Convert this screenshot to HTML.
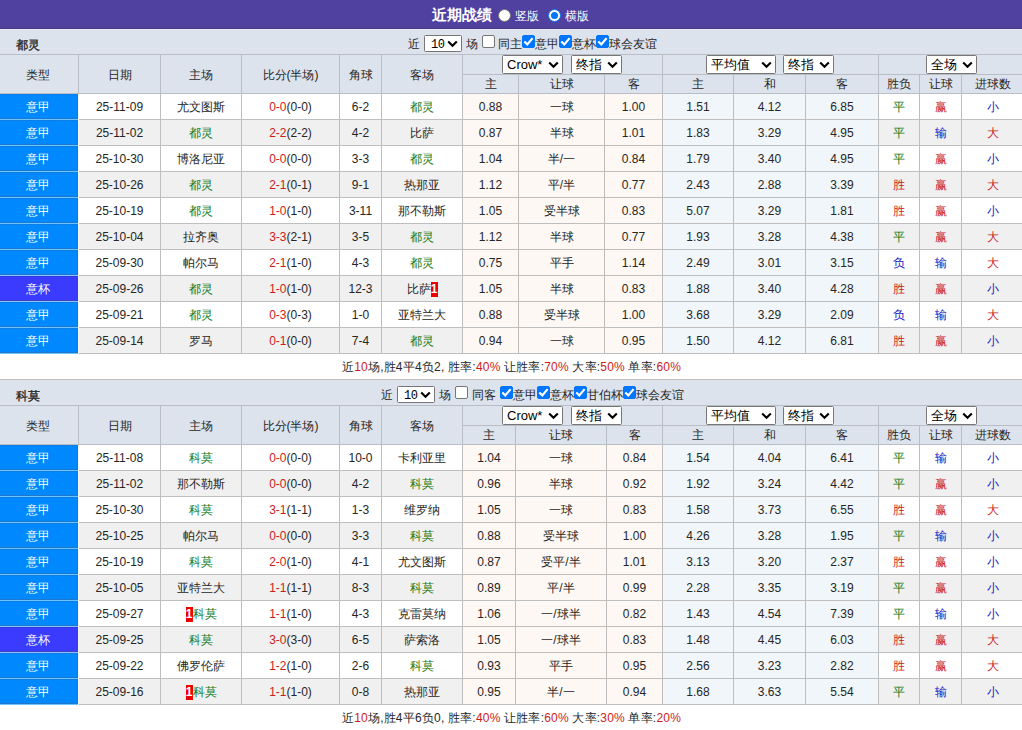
<!DOCTYPE html>
<html><head><meta charset="utf-8"><style>
html,body{margin:0;padding:0;width:1022px;height:730px;overflow:hidden;background:#fff}
body{position:relative;font-family:"Liberation Sans",sans-serif;font-size:12px;color:#262626}
body>div{position:absolute}
.c{text-align:center;white-space:nowrap;overflow:hidden}
.t{white-space:nowrap}
.sel{position:absolute;background:#fff;border:1px solid #767676;border-radius:1.5px;color:#000;padding-left:4px;box-sizing:content-box;white-space:nowrap}
.sel{width:auto}
.cb{width:11px;height:11px;border-radius:2px}
.cb.off{background:#fff;border:1px solid #767676}
.cb.on{background:#0075ff;border:1px solid #0075ff}
.cb svg{position:absolute;left:-1px;top:-1px}
.rad{width:11px;height:11px;border-radius:50%;background:#fff;border:1px solid #767676}
.rad.on{border:1px solid #0075ff;background:#fff}
.rad.on div{position:absolute;left:2px;top:2px;width:7px;height:7px;border-radius:50%;background:#0075ff}
.bd{display:inline-block;background:#e00;color:#fff;font-weight:bold;width:7px;height:15px;line-height:15px;vertical-align:middle;text-align:center;font-size:12px}
</style></head><body>
<div style="left:0px;top:0px;width:1022px;height:28px;background:#5040a0"></div>
<div style="left:0px;top:28px;width:1022px;height:1px;background:#4a3d82"></div>
<div class="t" style="left:432px;top:0px;font-size:15px;font-weight:bold;color:#fff;line-height:29px">近期战绩</div>
<div class="rad" style="left:498px;top:9px"></div>
<div class="t" style="left:515px;top:2px;color:#fff;line-height:29px">竖版</div>
<div class="rad on" style="left:548px;top:9px"><div></div></div>
<div class="t" style="left:565px;top:2px;color:#fff;line-height:29px">横版</div>
<div style="left:0px;top:29px;width:1022px;height:25px;background:#dde3ed"></div>
<div style="left:0px;top:29px;width:1022px;height:1px;background:#e4e4f8"></div>
<div class="t" style="left:16px;top:33px;-webkit-text-stroke:0.3px #222;line-height:25px;color:#222">都灵</div>
<div class="t" style="left:408px;top:32px;line-height:25px">近</div>
<div class="sel" style="left:424px;top:35px;width:32px;height:15px;line-height:15px;font-size:13px"><span style="font-family:Liberation Mono;font-size:12px;letter-spacing:-0.5px;margin-left:2px">10</span><svg class="chev" width="11" height="8" viewBox="0 0 11 8" style="position:absolute;right:3px;top:4px"><path d="M1.2 1.5 L5.5 5.8 L9.8 1.5" fill="none" stroke="#000" stroke-width="2.1"/></svg></div>
<div class="t" style="left:466px;top:32px;line-height:25px">场</div>
<div class="cb off" style="left:482px;top:35px"></div>
<div class="t" style="left:498px;top:32px;line-height:25px">同主</div>
<div class="cb on" style="left:522px;top:35px"><svg width="13" height="13" viewBox="0 0 13 13"><path d="M2.3 6.5 L5.3 9.4 L10.6 3.1" fill="none" stroke="#fff" stroke-width="2.2"/></svg></div>
<div class="t" style="left:535px;top:32px;line-height:25px">意甲</div>
<div class="cb on" style="left:559px;top:35px"><svg width="13" height="13" viewBox="0 0 13 13"><path d="M2.3 6.5 L5.3 9.4 L10.6 3.1" fill="none" stroke="#fff" stroke-width="2.2"/></svg></div>
<div class="t" style="left:572px;top:32px;line-height:25px">意杯</div>
<div class="cb on" style="left:596px;top:35px"><svg width="13" height="13" viewBox="0 0 13 13"><path d="M2.3 6.5 L5.3 9.4 L10.6 3.1" fill="none" stroke="#fff" stroke-width="2.2"/></svg></div>
<div class="t" style="left:609px;top:32px;line-height:25px">球会友谊</div>
<div style="left:0px;top:54px;width:1022px;height:1px;background:#b9bec6"></div>
<div style="left:0px;top:55px;width:1022px;height:38px;background:#dde3ed"></div>
<div class="c" style="left:-1px;top:56px;width:78px;height:38px;line-height:38px;">类型</div>
<div class="c" style="left:79px;top:56px;width:81px;height:38px;line-height:38px;">日期</div>
<div class="c" style="left:161px;top:56px;width:80px;height:38px;line-height:38px;">主场</div>
<div class="c" style="left:242px;top:56px;width:97px;height:38px;line-height:38px;">比分(半场)</div>
<div class="c" style="left:340px;top:56px;width:41px;height:38px;line-height:38px;">角球</div>
<div class="c" style="left:382px;top:56px;width:80px;height:38px;line-height:38px;">客场</div>
<div style="left:462px;top:74px;width:560px;height:1px;background:#b9bec6"></div>
<div style="left:0px;top:93px;width:1022px;height:1px;background:#b9bec6"></div>
<div class="sel" style="left:502px;top:55px;width:55px;height:17px;line-height:17px;font-size:13px">Crow*<svg class="chev" width="11" height="8" viewBox="0 0 11 8" style="position:absolute;right:3px;top:5px"><path d="M1.2 1.5 L5.5 5.8 L9.8 1.5" fill="none" stroke="#000" stroke-width="2.1"/></svg></div>
<div class="sel" style="left:571px;top:55px;width:45px;height:17px;line-height:17px;font-size:13px">终指<svg class="chev" width="11" height="8" viewBox="0 0 11 8" style="position:absolute;right:3px;top:5px"><path d="M1.2 1.5 L5.5 5.8 L9.8 1.5" fill="none" stroke="#000" stroke-width="2.1"/></svg></div>
<div class="sel" style="left:706px;top:55px;width:64px;height:17px;line-height:17px;font-size:13px">平均值<svg class="chev" width="11" height="8" viewBox="0 0 11 8" style="position:absolute;right:3px;top:5px"><path d="M1.2 1.5 L5.5 5.8 L9.8 1.5" fill="none" stroke="#000" stroke-width="2.1"/></svg></div>
<div class="sel" style="left:783px;top:55px;width:45px;height:17px;line-height:17px;font-size:13px">终指<svg class="chev" width="11" height="8" viewBox="0 0 11 8" style="position:absolute;right:3px;top:5px"><path d="M1.2 1.5 L5.5 5.8 L9.8 1.5" fill="none" stroke="#000" stroke-width="2.1"/></svg></div>
<div class="sel" style="left:926px;top:55px;width:45px;height:17px;line-height:17px;font-size:13px">全场<svg class="chev" width="11" height="8" viewBox="0 0 11 8" style="position:absolute;right:3px;top:5px"><path d="M1.2 1.5 L5.5 5.8 L9.8 1.5" fill="none" stroke="#000" stroke-width="2.1"/></svg></div>
<div class="c" style="left:463px;top:75px;width:55px;height:18px;line-height:18px;">主</div>
<div class="c" style="left:519px;top:75px;width:85px;height:18px;line-height:18px;">让球</div>
<div class="c" style="left:605px;top:75px;width:57px;height:18px;line-height:18px;">客</div>
<div class="c" style="left:663px;top:75px;width:70px;height:18px;line-height:18px;">主</div>
<div class="c" style="left:734px;top:75px;width:71px;height:18px;line-height:18px;">和</div>
<div class="c" style="left:806px;top:75px;width:72px;height:18px;line-height:18px;">客</div>
<div class="c" style="left:879px;top:75px;width:40px;height:18px;line-height:18px;">胜负</div>
<div class="c" style="left:920px;top:75px;width:41px;height:18px;line-height:18px;">让球</div>
<div class="c" style="left:962px;top:75px;width:61px;height:18px;line-height:18px;">进球数</div>
<div style="left:0px;top:94px;width:1022px;height:25px;background:#fff"></div>
<div style="left:0px;top:94px;width:78px;height:25px;background:#0088ff"></div>
<div style="left:0px;top:118px;width:77px;height:1px;background:#1e78cc"></div>
<div style="left:0px;top:94px;width:77px;height:1px;background:#0c7ee6"></div>
<div style="left:77px;top:94px;width:1px;height:25px;background:#1e78cc"></div>
<div class="c" style="left:-1px;top:95px;width:78px;height:25px;line-height:25px;color:#fff">意甲</div>
<div class="c" style="left:79px;top:95px;width:81px;height:25px;line-height:25px;">25-11-09</div>
<div class="c" style="left:161px;top:95px;width:80px;height:25px;line-height:25px;"><span style="">尤文图斯</span></div>
<div class="c" style="left:242px;top:95px;width:97px;height:25px;line-height:25px;"><span style="color:#cc1c1c">0-0</span>(0-0)</div>
<div class="c" style="left:340px;top:95px;width:41px;height:25px;line-height:25px;">6-2</div>
<div class="c" style="left:382px;top:95px;width:80px;height:25px;line-height:25px;"><span style="color:#157a15">都灵</span></div>
<div style="left:463px;top:94px;width:199px;height:25px;background:#fdf8f4"></div>
<div class="c" style="left:463px;top:95px;width:55px;height:25px;line-height:25px;">0.88</div>
<div class="c" style="left:519px;top:95px;width:85px;height:25px;line-height:25px;">一球</div>
<div class="c" style="left:605px;top:95px;width:57px;height:25px;line-height:25px;">1.00</div>
<div style="left:663px;top:94px;width:215px;height:25px;background:#f0f6fa"></div>
<div class="c" style="left:663px;top:95px;width:70px;height:25px;line-height:25px;">1.51</div>
<div class="c" style="left:734px;top:95px;width:71px;height:25px;line-height:25px;">4.12</div>
<div class="c" style="left:806px;top:95px;width:72px;height:25px;line-height:25px;">6.85</div>
<div class="c" style="left:879px;top:95px;width:40px;height:25px;line-height:25px;color:#157a15">平</div>
<div class="c" style="left:920px;top:95px;width:41px;height:25px;line-height:25px;color:#cc1c1c">赢</div>
<div class="c" style="left:962px;top:95px;width:61px;height:25px;line-height:25px;color:#1616c4">小</div>
<div style="left:0px;top:119px;width:78px;height:1px;background:#6cc4ff"></div>
<div style="left:78px;top:119px;width:944px;height:1px;background:#bebebe"></div>
<div style="left:0px;top:120px;width:1022px;height:25px;background:#f0f0f0"></div>
<div style="left:0px;top:120px;width:78px;height:25px;background:#0088ff"></div>
<div style="left:0px;top:144px;width:77px;height:1px;background:#1e78cc"></div>
<div style="left:0px;top:120px;width:77px;height:1px;background:#0c7ee6"></div>
<div style="left:77px;top:120px;width:1px;height:25px;background:#1e78cc"></div>
<div class="c" style="left:-1px;top:121px;width:78px;height:25px;line-height:25px;color:#fff">意甲</div>
<div class="c" style="left:79px;top:121px;width:81px;height:25px;line-height:25px;">25-11-02</div>
<div class="c" style="left:161px;top:121px;width:80px;height:25px;line-height:25px;"><span style="color:#157a15">都灵</span></div>
<div class="c" style="left:242px;top:121px;width:97px;height:25px;line-height:25px;"><span style="color:#cc1c1c">2-2</span>(2-2)</div>
<div class="c" style="left:340px;top:121px;width:41px;height:25px;line-height:25px;">4-2</div>
<div class="c" style="left:382px;top:121px;width:80px;height:25px;line-height:25px;"><span style="">比萨</span></div>
<div style="left:463px;top:120px;width:199px;height:25px;background:#fdf8f4"></div>
<div class="c" style="left:463px;top:121px;width:55px;height:25px;line-height:25px;">0.87</div>
<div class="c" style="left:519px;top:121px;width:85px;height:25px;line-height:25px;">半球</div>
<div class="c" style="left:605px;top:121px;width:57px;height:25px;line-height:25px;">1.01</div>
<div style="left:663px;top:120px;width:215px;height:25px;background:#f0f6fa"></div>
<div class="c" style="left:663px;top:121px;width:70px;height:25px;line-height:25px;">1.83</div>
<div class="c" style="left:734px;top:121px;width:71px;height:25px;line-height:25px;">3.29</div>
<div class="c" style="left:806px;top:121px;width:72px;height:25px;line-height:25px;">4.95</div>
<div class="c" style="left:879px;top:121px;width:40px;height:25px;line-height:25px;color:#157a15">平</div>
<div class="c" style="left:920px;top:121px;width:41px;height:25px;line-height:25px;color:#1616c4">输</div>
<div class="c" style="left:962px;top:121px;width:61px;height:25px;line-height:25px;color:#cc1c1c">大</div>
<div style="left:0px;top:145px;width:78px;height:1px;background:#6cc4ff"></div>
<div style="left:78px;top:145px;width:944px;height:1px;background:#bebebe"></div>
<div style="left:0px;top:146px;width:1022px;height:25px;background:#fff"></div>
<div style="left:0px;top:146px;width:78px;height:25px;background:#0088ff"></div>
<div style="left:0px;top:170px;width:77px;height:1px;background:#1e78cc"></div>
<div style="left:0px;top:146px;width:77px;height:1px;background:#0c7ee6"></div>
<div style="left:77px;top:146px;width:1px;height:25px;background:#1e78cc"></div>
<div class="c" style="left:-1px;top:147px;width:78px;height:25px;line-height:25px;color:#fff">意甲</div>
<div class="c" style="left:79px;top:147px;width:81px;height:25px;line-height:25px;">25-10-30</div>
<div class="c" style="left:161px;top:147px;width:80px;height:25px;line-height:25px;"><span style="">博洛尼亚</span></div>
<div class="c" style="left:242px;top:147px;width:97px;height:25px;line-height:25px;"><span style="color:#cc1c1c">0-0</span>(0-0)</div>
<div class="c" style="left:340px;top:147px;width:41px;height:25px;line-height:25px;">3-3</div>
<div class="c" style="left:382px;top:147px;width:80px;height:25px;line-height:25px;"><span style="color:#157a15">都灵</span></div>
<div style="left:463px;top:146px;width:199px;height:25px;background:#fdf8f4"></div>
<div class="c" style="left:463px;top:147px;width:55px;height:25px;line-height:25px;">1.04</div>
<div class="c" style="left:519px;top:147px;width:85px;height:25px;line-height:25px;">半/一</div>
<div class="c" style="left:605px;top:147px;width:57px;height:25px;line-height:25px;">0.84</div>
<div style="left:663px;top:146px;width:215px;height:25px;background:#f0f6fa"></div>
<div class="c" style="left:663px;top:147px;width:70px;height:25px;line-height:25px;">1.79</div>
<div class="c" style="left:734px;top:147px;width:71px;height:25px;line-height:25px;">3.40</div>
<div class="c" style="left:806px;top:147px;width:72px;height:25px;line-height:25px;">4.95</div>
<div class="c" style="left:879px;top:147px;width:40px;height:25px;line-height:25px;color:#157a15">平</div>
<div class="c" style="left:920px;top:147px;width:41px;height:25px;line-height:25px;color:#cc1c1c">赢</div>
<div class="c" style="left:962px;top:147px;width:61px;height:25px;line-height:25px;color:#1616c4">小</div>
<div style="left:0px;top:171px;width:78px;height:1px;background:#6cc4ff"></div>
<div style="left:78px;top:171px;width:944px;height:1px;background:#bebebe"></div>
<div style="left:0px;top:172px;width:1022px;height:25px;background:#f0f0f0"></div>
<div style="left:0px;top:172px;width:78px;height:25px;background:#0088ff"></div>
<div style="left:0px;top:196px;width:77px;height:1px;background:#1e78cc"></div>
<div style="left:0px;top:172px;width:77px;height:1px;background:#0c7ee6"></div>
<div style="left:77px;top:172px;width:1px;height:25px;background:#1e78cc"></div>
<div class="c" style="left:-1px;top:173px;width:78px;height:25px;line-height:25px;color:#fff">意甲</div>
<div class="c" style="left:79px;top:173px;width:81px;height:25px;line-height:25px;">25-10-26</div>
<div class="c" style="left:161px;top:173px;width:80px;height:25px;line-height:25px;"><span style="color:#157a15">都灵</span></div>
<div class="c" style="left:242px;top:173px;width:97px;height:25px;line-height:25px;"><span style="color:#cc1c1c">2-1</span>(0-1)</div>
<div class="c" style="left:340px;top:173px;width:41px;height:25px;line-height:25px;">9-1</div>
<div class="c" style="left:382px;top:173px;width:80px;height:25px;line-height:25px;"><span style="">热那亚</span></div>
<div style="left:463px;top:172px;width:199px;height:25px;background:#fdf8f4"></div>
<div class="c" style="left:463px;top:173px;width:55px;height:25px;line-height:25px;">1.12</div>
<div class="c" style="left:519px;top:173px;width:85px;height:25px;line-height:25px;">平/半</div>
<div class="c" style="left:605px;top:173px;width:57px;height:25px;line-height:25px;">0.77</div>
<div style="left:663px;top:172px;width:215px;height:25px;background:#f0f6fa"></div>
<div class="c" style="left:663px;top:173px;width:70px;height:25px;line-height:25px;">2.43</div>
<div class="c" style="left:734px;top:173px;width:71px;height:25px;line-height:25px;">2.88</div>
<div class="c" style="left:806px;top:173px;width:72px;height:25px;line-height:25px;">3.39</div>
<div class="c" style="left:879px;top:173px;width:40px;height:25px;line-height:25px;color:#cc1c1c">胜</div>
<div class="c" style="left:920px;top:173px;width:41px;height:25px;line-height:25px;color:#cc1c1c">赢</div>
<div class="c" style="left:962px;top:173px;width:61px;height:25px;line-height:25px;color:#cc1c1c">大</div>
<div style="left:0px;top:197px;width:78px;height:1px;background:#6cc4ff"></div>
<div style="left:78px;top:197px;width:944px;height:1px;background:#bebebe"></div>
<div style="left:0px;top:198px;width:1022px;height:25px;background:#fff"></div>
<div style="left:0px;top:198px;width:78px;height:25px;background:#0088ff"></div>
<div style="left:0px;top:222px;width:77px;height:1px;background:#1e78cc"></div>
<div style="left:0px;top:198px;width:77px;height:1px;background:#0c7ee6"></div>
<div style="left:77px;top:198px;width:1px;height:25px;background:#1e78cc"></div>
<div class="c" style="left:-1px;top:199px;width:78px;height:25px;line-height:25px;color:#fff">意甲</div>
<div class="c" style="left:79px;top:199px;width:81px;height:25px;line-height:25px;">25-10-19</div>
<div class="c" style="left:161px;top:199px;width:80px;height:25px;line-height:25px;"><span style="color:#157a15">都灵</span></div>
<div class="c" style="left:242px;top:199px;width:97px;height:25px;line-height:25px;"><span style="color:#cc1c1c">1-0</span>(1-0)</div>
<div class="c" style="left:340px;top:199px;width:41px;height:25px;line-height:25px;">3-11</div>
<div class="c" style="left:382px;top:199px;width:80px;height:25px;line-height:25px;"><span style="">那不勒斯</span></div>
<div style="left:463px;top:198px;width:199px;height:25px;background:#fdf8f4"></div>
<div class="c" style="left:463px;top:199px;width:55px;height:25px;line-height:25px;">1.05</div>
<div class="c" style="left:519px;top:199px;width:85px;height:25px;line-height:25px;">受半球</div>
<div class="c" style="left:605px;top:199px;width:57px;height:25px;line-height:25px;">0.83</div>
<div style="left:663px;top:198px;width:215px;height:25px;background:#f0f6fa"></div>
<div class="c" style="left:663px;top:199px;width:70px;height:25px;line-height:25px;">5.07</div>
<div class="c" style="left:734px;top:199px;width:71px;height:25px;line-height:25px;">3.29</div>
<div class="c" style="left:806px;top:199px;width:72px;height:25px;line-height:25px;">1.81</div>
<div class="c" style="left:879px;top:199px;width:40px;height:25px;line-height:25px;color:#cc1c1c">胜</div>
<div class="c" style="left:920px;top:199px;width:41px;height:25px;line-height:25px;color:#cc1c1c">赢</div>
<div class="c" style="left:962px;top:199px;width:61px;height:25px;line-height:25px;color:#1616c4">小</div>
<div style="left:0px;top:223px;width:78px;height:1px;background:#6cc4ff"></div>
<div style="left:78px;top:223px;width:944px;height:1px;background:#bebebe"></div>
<div style="left:0px;top:224px;width:1022px;height:25px;background:#f0f0f0"></div>
<div style="left:0px;top:224px;width:78px;height:25px;background:#0088ff"></div>
<div style="left:0px;top:248px;width:77px;height:1px;background:#1e78cc"></div>
<div style="left:0px;top:224px;width:77px;height:1px;background:#0c7ee6"></div>
<div style="left:77px;top:224px;width:1px;height:25px;background:#1e78cc"></div>
<div class="c" style="left:-1px;top:225px;width:78px;height:25px;line-height:25px;color:#fff">意甲</div>
<div class="c" style="left:79px;top:225px;width:81px;height:25px;line-height:25px;">25-10-04</div>
<div class="c" style="left:161px;top:225px;width:80px;height:25px;line-height:25px;"><span style="">拉齐奥</span></div>
<div class="c" style="left:242px;top:225px;width:97px;height:25px;line-height:25px;"><span style="color:#cc1c1c">3-3</span>(2-1)</div>
<div class="c" style="left:340px;top:225px;width:41px;height:25px;line-height:25px;">3-5</div>
<div class="c" style="left:382px;top:225px;width:80px;height:25px;line-height:25px;"><span style="color:#157a15">都灵</span></div>
<div style="left:463px;top:224px;width:199px;height:25px;background:#fdf8f4"></div>
<div class="c" style="left:463px;top:225px;width:55px;height:25px;line-height:25px;">1.12</div>
<div class="c" style="left:519px;top:225px;width:85px;height:25px;line-height:25px;">半球</div>
<div class="c" style="left:605px;top:225px;width:57px;height:25px;line-height:25px;">0.77</div>
<div style="left:663px;top:224px;width:215px;height:25px;background:#f0f6fa"></div>
<div class="c" style="left:663px;top:225px;width:70px;height:25px;line-height:25px;">1.93</div>
<div class="c" style="left:734px;top:225px;width:71px;height:25px;line-height:25px;">3.28</div>
<div class="c" style="left:806px;top:225px;width:72px;height:25px;line-height:25px;">4.38</div>
<div class="c" style="left:879px;top:225px;width:40px;height:25px;line-height:25px;color:#157a15">平</div>
<div class="c" style="left:920px;top:225px;width:41px;height:25px;line-height:25px;color:#cc1c1c">赢</div>
<div class="c" style="left:962px;top:225px;width:61px;height:25px;line-height:25px;color:#cc1c1c">大</div>
<div style="left:0px;top:249px;width:78px;height:1px;background:#6cc4ff"></div>
<div style="left:78px;top:249px;width:944px;height:1px;background:#bebebe"></div>
<div style="left:0px;top:250px;width:1022px;height:25px;background:#fff"></div>
<div style="left:0px;top:250px;width:78px;height:25px;background:#0088ff"></div>
<div style="left:0px;top:274px;width:77px;height:1px;background:#1e78cc"></div>
<div style="left:0px;top:250px;width:77px;height:1px;background:#0c7ee6"></div>
<div style="left:77px;top:250px;width:1px;height:25px;background:#1e78cc"></div>
<div class="c" style="left:-1px;top:251px;width:78px;height:25px;line-height:25px;color:#fff">意甲</div>
<div class="c" style="left:79px;top:251px;width:81px;height:25px;line-height:25px;">25-09-30</div>
<div class="c" style="left:161px;top:251px;width:80px;height:25px;line-height:25px;"><span style="">帕尔马</span></div>
<div class="c" style="left:242px;top:251px;width:97px;height:25px;line-height:25px;"><span style="color:#cc1c1c">2-1</span>(1-0)</div>
<div class="c" style="left:340px;top:251px;width:41px;height:25px;line-height:25px;">4-3</div>
<div class="c" style="left:382px;top:251px;width:80px;height:25px;line-height:25px;"><span style="color:#157a15">都灵</span></div>
<div style="left:463px;top:250px;width:199px;height:25px;background:#fdf8f4"></div>
<div class="c" style="left:463px;top:251px;width:55px;height:25px;line-height:25px;">0.75</div>
<div class="c" style="left:519px;top:251px;width:85px;height:25px;line-height:25px;">平手</div>
<div class="c" style="left:605px;top:251px;width:57px;height:25px;line-height:25px;">1.14</div>
<div style="left:663px;top:250px;width:215px;height:25px;background:#f0f6fa"></div>
<div class="c" style="left:663px;top:251px;width:70px;height:25px;line-height:25px;">2.49</div>
<div class="c" style="left:734px;top:251px;width:71px;height:25px;line-height:25px;">3.01</div>
<div class="c" style="left:806px;top:251px;width:72px;height:25px;line-height:25px;">3.15</div>
<div class="c" style="left:879px;top:251px;width:40px;height:25px;line-height:25px;color:#1616c4">负</div>
<div class="c" style="left:920px;top:251px;width:41px;height:25px;line-height:25px;color:#1616c4">输</div>
<div class="c" style="left:962px;top:251px;width:61px;height:25px;line-height:25px;color:#cc1c1c">大</div>
<div style="left:0px;top:275px;width:78px;height:1px;background:#8cc0f8"></div>
<div style="left:78px;top:275px;width:944px;height:1px;background:#bebebe"></div>
<div style="left:0px;top:276px;width:1022px;height:25px;background:#f0f0f0"></div>
<div style="left:0px;top:276px;width:78px;height:25px;background:#3b3bff"></div>
<div style="left:0px;top:300px;width:77px;height:1px;background:#3f3fca"></div>
<div style="left:0px;top:276px;width:77px;height:1px;background:#3138e0"></div>
<div style="left:77px;top:276px;width:1px;height:25px;background:#3f3fca"></div>
<div class="c" style="left:-1px;top:277px;width:78px;height:25px;line-height:25px;color:#fff">意杯</div>
<div class="c" style="left:79px;top:277px;width:81px;height:25px;line-height:25px;">25-09-26</div>
<div class="c" style="left:161px;top:277px;width:80px;height:25px;line-height:25px;"><span style="color:#157a15">都灵</span></div>
<div class="c" style="left:242px;top:277px;width:97px;height:25px;line-height:25px;"><span style="color:#cc1c1c">1-0</span>(1-0)</div>
<div class="c" style="left:340px;top:277px;width:41px;height:25px;line-height:25px;">12-3</div>
<div class="c" style="left:382px;top:277px;width:80px;height:25px;line-height:25px;"><span style="">比萨</span><span class="bd">1</span></div>
<div style="left:463px;top:276px;width:199px;height:25px;background:#fdf8f4"></div>
<div class="c" style="left:463px;top:277px;width:55px;height:25px;line-height:25px;">1.05</div>
<div class="c" style="left:519px;top:277px;width:85px;height:25px;line-height:25px;">半球</div>
<div class="c" style="left:605px;top:277px;width:57px;height:25px;line-height:25px;">0.83</div>
<div style="left:663px;top:276px;width:215px;height:25px;background:#f0f6fa"></div>
<div class="c" style="left:663px;top:277px;width:70px;height:25px;line-height:25px;">1.88</div>
<div class="c" style="left:734px;top:277px;width:71px;height:25px;line-height:25px;">3.40</div>
<div class="c" style="left:806px;top:277px;width:72px;height:25px;line-height:25px;">4.28</div>
<div class="c" style="left:879px;top:277px;width:40px;height:25px;line-height:25px;color:#cc1c1c">胜</div>
<div class="c" style="left:920px;top:277px;width:41px;height:25px;line-height:25px;color:#cc1c1c">赢</div>
<div class="c" style="left:962px;top:277px;width:61px;height:25px;line-height:25px;color:#1616c4">小</div>
<div style="left:0px;top:301px;width:78px;height:1px;background:#8cc0f8"></div>
<div style="left:78px;top:301px;width:944px;height:1px;background:#bebebe"></div>
<div style="left:0px;top:302px;width:1022px;height:25px;background:#fff"></div>
<div style="left:0px;top:302px;width:78px;height:25px;background:#0088ff"></div>
<div style="left:0px;top:326px;width:77px;height:1px;background:#1e78cc"></div>
<div style="left:0px;top:302px;width:77px;height:1px;background:#0c7ee6"></div>
<div style="left:77px;top:302px;width:1px;height:25px;background:#1e78cc"></div>
<div class="c" style="left:-1px;top:303px;width:78px;height:25px;line-height:25px;color:#fff">意甲</div>
<div class="c" style="left:79px;top:303px;width:81px;height:25px;line-height:25px;">25-09-21</div>
<div class="c" style="left:161px;top:303px;width:80px;height:25px;line-height:25px;"><span style="color:#157a15">都灵</span></div>
<div class="c" style="left:242px;top:303px;width:97px;height:25px;line-height:25px;"><span style="color:#cc1c1c">0-3</span>(0-3)</div>
<div class="c" style="left:340px;top:303px;width:41px;height:25px;line-height:25px;">1-0</div>
<div class="c" style="left:382px;top:303px;width:80px;height:25px;line-height:25px;"><span style="">亚特兰大</span></div>
<div style="left:463px;top:302px;width:199px;height:25px;background:#fdf8f4"></div>
<div class="c" style="left:463px;top:303px;width:55px;height:25px;line-height:25px;">0.88</div>
<div class="c" style="left:519px;top:303px;width:85px;height:25px;line-height:25px;">受半球</div>
<div class="c" style="left:605px;top:303px;width:57px;height:25px;line-height:25px;">1.00</div>
<div style="left:663px;top:302px;width:215px;height:25px;background:#f0f6fa"></div>
<div class="c" style="left:663px;top:303px;width:70px;height:25px;line-height:25px;">3.68</div>
<div class="c" style="left:734px;top:303px;width:71px;height:25px;line-height:25px;">3.29</div>
<div class="c" style="left:806px;top:303px;width:72px;height:25px;line-height:25px;">2.09</div>
<div class="c" style="left:879px;top:303px;width:40px;height:25px;line-height:25px;color:#1616c4">负</div>
<div class="c" style="left:920px;top:303px;width:41px;height:25px;line-height:25px;color:#1616c4">输</div>
<div class="c" style="left:962px;top:303px;width:61px;height:25px;line-height:25px;color:#cc1c1c">大</div>
<div style="left:0px;top:327px;width:78px;height:1px;background:#6cc4ff"></div>
<div style="left:78px;top:327px;width:944px;height:1px;background:#bebebe"></div>
<div style="left:0px;top:328px;width:1022px;height:25px;background:#f0f0f0"></div>
<div style="left:0px;top:328px;width:78px;height:25px;background:#0088ff"></div>
<div style="left:0px;top:352px;width:77px;height:1px;background:#1e78cc"></div>
<div style="left:0px;top:328px;width:77px;height:1px;background:#0c7ee6"></div>
<div style="left:77px;top:328px;width:1px;height:25px;background:#1e78cc"></div>
<div class="c" style="left:-1px;top:329px;width:78px;height:25px;line-height:25px;color:#fff">意甲</div>
<div class="c" style="left:79px;top:329px;width:81px;height:25px;line-height:25px;">25-09-14</div>
<div class="c" style="left:161px;top:329px;width:80px;height:25px;line-height:25px;"><span style="">罗马</span></div>
<div class="c" style="left:242px;top:329px;width:97px;height:25px;line-height:25px;"><span style="color:#cc1c1c">0-1</span>(0-0)</div>
<div class="c" style="left:340px;top:329px;width:41px;height:25px;line-height:25px;">7-4</div>
<div class="c" style="left:382px;top:329px;width:80px;height:25px;line-height:25px;"><span style="color:#157a15">都灵</span></div>
<div style="left:463px;top:328px;width:199px;height:25px;background:#fdf8f4"></div>
<div class="c" style="left:463px;top:329px;width:55px;height:25px;line-height:25px;">0.94</div>
<div class="c" style="left:519px;top:329px;width:85px;height:25px;line-height:25px;">一球</div>
<div class="c" style="left:605px;top:329px;width:57px;height:25px;line-height:25px;">0.95</div>
<div style="left:663px;top:328px;width:215px;height:25px;background:#f0f6fa"></div>
<div class="c" style="left:663px;top:329px;width:70px;height:25px;line-height:25px;">1.50</div>
<div class="c" style="left:734px;top:329px;width:71px;height:25px;line-height:25px;">4.12</div>
<div class="c" style="left:806px;top:329px;width:72px;height:25px;line-height:25px;">6.81</div>
<div class="c" style="left:879px;top:329px;width:40px;height:25px;line-height:25px;color:#cc1c1c">胜</div>
<div class="c" style="left:920px;top:329px;width:41px;height:25px;line-height:25px;color:#cc1c1c">赢</div>
<div class="c" style="left:962px;top:329px;width:61px;height:25px;line-height:25px;color:#1616c4">小</div>
<div style="left:0px;top:353px;width:78px;height:1px;background:#6cc4ff"></div>
<div style="left:78px;top:353px;width:944px;height:1px;background:#bebebe"></div>
<div style="left:78px;top:55px;width:1px;height:38px;background:#b9bec6"></div>
<div style="left:78px;top:94px;width:1px;height:260px;background:#bebebe"></div>
<div style="left:160px;top:55px;width:1px;height:38px;background:#b9bec6"></div>
<div style="left:160px;top:94px;width:1px;height:260px;background:#bebebe"></div>
<div style="left:241px;top:55px;width:1px;height:38px;background:#b9bec6"></div>
<div style="left:241px;top:94px;width:1px;height:260px;background:#bebebe"></div>
<div style="left:339px;top:55px;width:1px;height:38px;background:#b9bec6"></div>
<div style="left:339px;top:94px;width:1px;height:260px;background:#bebebe"></div>
<div style="left:381px;top:55px;width:1px;height:38px;background:#b9bec6"></div>
<div style="left:381px;top:94px;width:1px;height:260px;background:#bebebe"></div>
<div style="left:462px;top:55px;width:1px;height:38px;background:#b9bec6"></div>
<div style="left:462px;top:94px;width:1px;height:260px;background:#bebebe"></div>
<div style="left:662px;top:55px;width:1px;height:38px;background:#b9bec6"></div>
<div style="left:662px;top:94px;width:1px;height:260px;background:#bebebe"></div>
<div style="left:878px;top:55px;width:1px;height:38px;background:#b9bec6"></div>
<div style="left:878px;top:94px;width:1px;height:260px;background:#bebebe"></div>
<div style="left:518px;top:75px;width:1px;height:18px;background:#b9bec6"></div>
<div style="left:518px;top:94px;width:1px;height:260px;background:#bebebe"></div>
<div style="left:604px;top:75px;width:1px;height:18px;background:#b9bec6"></div>
<div style="left:604px;top:94px;width:1px;height:260px;background:#bebebe"></div>
<div style="left:733px;top:75px;width:1px;height:18px;background:#b9bec6"></div>
<div style="left:733px;top:94px;width:1px;height:260px;background:#bebebe"></div>
<div style="left:805px;top:75px;width:1px;height:18px;background:#b9bec6"></div>
<div style="left:805px;top:94px;width:1px;height:260px;background:#bebebe"></div>
<div style="left:919px;top:75px;width:1px;height:18px;background:#b9bec6"></div>
<div style="left:919px;top:94px;width:1px;height:260px;background:#bebebe"></div>
<div style="left:961px;top:75px;width:1px;height:18px;background:#b9bec6"></div>
<div style="left:961px;top:94px;width:1px;height:260px;background:#bebebe"></div>
<div style="left:78px;top:94px;width:1px;height:260px;background:#f4f4f4"></div>
<div style="left:0px;top:354px;width:1022px;height:25px;background:#fff"></div>
<div class="c" style="left:0px;top:355px;width:1023px;height:25px;line-height:25px;letter-spacing:0.2px">近<span style="color:#cc1c1c">10</span>场,胜4平4负2, 胜率:<span style="color:#cc1c1c">40%</span> 让胜率:<span style="color:#cc1c1c">70%</span> 大率:<span style="color:#cc1c1c">50%</span> 单率:<span style="color:#cc1c1c">60%</span></div>
<div style="left:0px;top:379px;width:1022px;height:1px;background:#bebebe"></div>
<div style="left:0px;top:380px;width:1022px;height:25px;background:#dde3ed"></div>
<div style="left:0px;top:380px;width:1022px;height:1px;#bebebe"></div>
<div class="t" style="left:16px;top:384px;-webkit-text-stroke:0.3px #222;line-height:25px;color:#222">科莫</div>
<div class="t" style="left:381px;top:383px;line-height:25px">近</div>
<div class="sel" style="left:397px;top:386px;width:32px;height:15px;line-height:15px;font-size:13px"><span style="font-family:Liberation Mono;font-size:12px;letter-spacing:-0.5px;margin-left:2px">10</span><svg class="chev" width="11" height="8" viewBox="0 0 11 8" style="position:absolute;right:3px;top:4px"><path d="M1.2 1.5 L5.5 5.8 L9.8 1.5" fill="none" stroke="#000" stroke-width="2.1"/></svg></div>
<div class="t" style="left:439px;top:383px;line-height:25px">场</div>
<div class="cb off" style="left:455px;top:386px"></div>
<div class="t" style="left:472px;top:383px;line-height:25px">同客</div>
<div class="cb on" style="left:500px;top:386px"><svg width="13" height="13" viewBox="0 0 13 13"><path d="M2.3 6.5 L5.3 9.4 L10.6 3.1" fill="none" stroke="#fff" stroke-width="2.2"/></svg></div>
<div class="t" style="left:513px;top:383px;line-height:25px">意甲</div>
<div class="cb on" style="left:537px;top:386px"><svg width="13" height="13" viewBox="0 0 13 13"><path d="M2.3 6.5 L5.3 9.4 L10.6 3.1" fill="none" stroke="#fff" stroke-width="2.2"/></svg></div>
<div class="t" style="left:550px;top:383px;line-height:25px">意杯</div>
<div class="cb on" style="left:574px;top:386px"><svg width="13" height="13" viewBox="0 0 13 13"><path d="M2.3 6.5 L5.3 9.4 L10.6 3.1" fill="none" stroke="#fff" stroke-width="2.2"/></svg></div>
<div class="t" style="left:587px;top:383px;line-height:25px">甘伯杯</div>
<div class="cb on" style="left:623px;top:386px"><svg width="13" height="13" viewBox="0 0 13 13"><path d="M2.3 6.5 L5.3 9.4 L10.6 3.1" fill="none" stroke="#fff" stroke-width="2.2"/></svg></div>
<div class="t" style="left:636px;top:383px;line-height:25px">球会友谊</div>
<div style="left:0px;top:405px;width:1022px;height:1px;background:#b9bec6"></div>
<div style="left:0px;top:406px;width:1022px;height:38px;background:#dde3ed"></div>
<div class="c" style="left:-1px;top:407px;width:78px;height:38px;line-height:38px;">类型</div>
<div class="c" style="left:79px;top:407px;width:81px;height:38px;line-height:38px;">日期</div>
<div class="c" style="left:161px;top:407px;width:80px;height:38px;line-height:38px;">主场</div>
<div class="c" style="left:242px;top:407px;width:97px;height:38px;line-height:38px;">比分(半场)</div>
<div class="c" style="left:340px;top:407px;width:41px;height:38px;line-height:38px;">角球</div>
<div class="c" style="left:382px;top:407px;width:80px;height:38px;line-height:38px;">客场</div>
<div style="left:462px;top:425px;width:560px;height:1px;background:#b9bec6"></div>
<div style="left:0px;top:444px;width:1022px;height:1px;background:#b9bec6"></div>
<div class="sel" style="left:502px;top:406px;width:55px;height:17px;line-height:17px;font-size:13px">Crow*<svg class="chev" width="11" height="8" viewBox="0 0 11 8" style="position:absolute;right:3px;top:5px"><path d="M1.2 1.5 L5.5 5.8 L9.8 1.5" fill="none" stroke="#000" stroke-width="2.1"/></svg></div>
<div class="sel" style="left:571px;top:406px;width:45px;height:17px;line-height:17px;font-size:13px">终指<svg class="chev" width="11" height="8" viewBox="0 0 11 8" style="position:absolute;right:3px;top:5px"><path d="M1.2 1.5 L5.5 5.8 L9.8 1.5" fill="none" stroke="#000" stroke-width="2.1"/></svg></div>
<div class="sel" style="left:706px;top:406px;width:64px;height:17px;line-height:17px;font-size:13px">平均值<svg class="chev" width="11" height="8" viewBox="0 0 11 8" style="position:absolute;right:3px;top:5px"><path d="M1.2 1.5 L5.5 5.8 L9.8 1.5" fill="none" stroke="#000" stroke-width="2.1"/></svg></div>
<div class="sel" style="left:783px;top:406px;width:45px;height:17px;line-height:17px;font-size:13px">终指<svg class="chev" width="11" height="8" viewBox="0 0 11 8" style="position:absolute;right:3px;top:5px"><path d="M1.2 1.5 L5.5 5.8 L9.8 1.5" fill="none" stroke="#000" stroke-width="2.1"/></svg></div>
<div class="sel" style="left:926px;top:406px;width:45px;height:17px;line-height:17px;font-size:13px">全场<svg class="chev" width="11" height="8" viewBox="0 0 11 8" style="position:absolute;right:3px;top:5px"><path d="M1.2 1.5 L5.5 5.8 L9.8 1.5" fill="none" stroke="#000" stroke-width="2.1"/></svg></div>
<div class="c" style="left:463px;top:426px;width:52px;height:18px;line-height:18px;">主</div>
<div class="c" style="left:516px;top:426px;width:90px;height:18px;line-height:18px;">让球</div>
<div class="c" style="left:607px;top:426px;width:55px;height:18px;line-height:18px;">客</div>
<div class="c" style="left:663px;top:426px;width:70px;height:18px;line-height:18px;">主</div>
<div class="c" style="left:734px;top:426px;width:71px;height:18px;line-height:18px;">和</div>
<div class="c" style="left:806px;top:426px;width:72px;height:18px;line-height:18px;">客</div>
<div class="c" style="left:879px;top:426px;width:40px;height:18px;line-height:18px;">胜负</div>
<div class="c" style="left:920px;top:426px;width:41px;height:18px;line-height:18px;">让球</div>
<div class="c" style="left:962px;top:426px;width:61px;height:18px;line-height:18px;">进球数</div>
<div style="left:0px;top:445px;width:1022px;height:25px;background:#fff"></div>
<div style="left:0px;top:445px;width:78px;height:25px;background:#0088ff"></div>
<div style="left:0px;top:469px;width:77px;height:1px;background:#1e78cc"></div>
<div style="left:0px;top:445px;width:77px;height:1px;background:#0c7ee6"></div>
<div style="left:77px;top:445px;width:1px;height:25px;background:#1e78cc"></div>
<div class="c" style="left:-1px;top:446px;width:78px;height:25px;line-height:25px;color:#fff">意甲</div>
<div class="c" style="left:79px;top:446px;width:81px;height:25px;line-height:25px;">25-11-08</div>
<div class="c" style="left:161px;top:446px;width:80px;height:25px;line-height:25px;"><span style="color:#157a15">科莫</span></div>
<div class="c" style="left:242px;top:446px;width:97px;height:25px;line-height:25px;"><span style="color:#cc1c1c">0-0</span>(0-0)</div>
<div class="c" style="left:340px;top:446px;width:41px;height:25px;line-height:25px;">10-0</div>
<div class="c" style="left:382px;top:446px;width:80px;height:25px;line-height:25px;"><span style="">卡利亚里</span></div>
<div style="left:463px;top:445px;width:199px;height:25px;background:#fdf8f4"></div>
<div class="c" style="left:463px;top:446px;width:52px;height:25px;line-height:25px;">1.04</div>
<div class="c" style="left:516px;top:446px;width:90px;height:25px;line-height:25px;">一球</div>
<div class="c" style="left:607px;top:446px;width:55px;height:25px;line-height:25px;">0.84</div>
<div style="left:663px;top:445px;width:215px;height:25px;background:#f0f6fa"></div>
<div class="c" style="left:663px;top:446px;width:70px;height:25px;line-height:25px;">1.54</div>
<div class="c" style="left:734px;top:446px;width:71px;height:25px;line-height:25px;">4.04</div>
<div class="c" style="left:806px;top:446px;width:72px;height:25px;line-height:25px;">6.41</div>
<div class="c" style="left:879px;top:446px;width:40px;height:25px;line-height:25px;color:#157a15">平</div>
<div class="c" style="left:920px;top:446px;width:41px;height:25px;line-height:25px;color:#1616c4">输</div>
<div class="c" style="left:962px;top:446px;width:61px;height:25px;line-height:25px;color:#1616c4">小</div>
<div style="left:0px;top:470px;width:78px;height:1px;background:#6cc4ff"></div>
<div style="left:78px;top:470px;width:944px;height:1px;background:#bebebe"></div>
<div style="left:0px;top:471px;width:1022px;height:25px;background:#f0f0f0"></div>
<div style="left:0px;top:471px;width:78px;height:25px;background:#0088ff"></div>
<div style="left:0px;top:495px;width:77px;height:1px;background:#1e78cc"></div>
<div style="left:0px;top:471px;width:77px;height:1px;background:#0c7ee6"></div>
<div style="left:77px;top:471px;width:1px;height:25px;background:#1e78cc"></div>
<div class="c" style="left:-1px;top:472px;width:78px;height:25px;line-height:25px;color:#fff">意甲</div>
<div class="c" style="left:79px;top:472px;width:81px;height:25px;line-height:25px;">25-11-02</div>
<div class="c" style="left:161px;top:472px;width:80px;height:25px;line-height:25px;"><span style="">那不勒斯</span></div>
<div class="c" style="left:242px;top:472px;width:97px;height:25px;line-height:25px;"><span style="color:#cc1c1c">0-0</span>(0-0)</div>
<div class="c" style="left:340px;top:472px;width:41px;height:25px;line-height:25px;">4-2</div>
<div class="c" style="left:382px;top:472px;width:80px;height:25px;line-height:25px;"><span style="color:#157a15">科莫</span></div>
<div style="left:463px;top:471px;width:199px;height:25px;background:#fdf8f4"></div>
<div class="c" style="left:463px;top:472px;width:52px;height:25px;line-height:25px;">0.96</div>
<div class="c" style="left:516px;top:472px;width:90px;height:25px;line-height:25px;">半球</div>
<div class="c" style="left:607px;top:472px;width:55px;height:25px;line-height:25px;">0.92</div>
<div style="left:663px;top:471px;width:215px;height:25px;background:#f0f6fa"></div>
<div class="c" style="left:663px;top:472px;width:70px;height:25px;line-height:25px;">1.92</div>
<div class="c" style="left:734px;top:472px;width:71px;height:25px;line-height:25px;">3.24</div>
<div class="c" style="left:806px;top:472px;width:72px;height:25px;line-height:25px;">4.42</div>
<div class="c" style="left:879px;top:472px;width:40px;height:25px;line-height:25px;color:#157a15">平</div>
<div class="c" style="left:920px;top:472px;width:41px;height:25px;line-height:25px;color:#cc1c1c">赢</div>
<div class="c" style="left:962px;top:472px;width:61px;height:25px;line-height:25px;color:#1616c4">小</div>
<div style="left:0px;top:496px;width:78px;height:1px;background:#6cc4ff"></div>
<div style="left:78px;top:496px;width:944px;height:1px;background:#bebebe"></div>
<div style="left:0px;top:497px;width:1022px;height:25px;background:#fff"></div>
<div style="left:0px;top:497px;width:78px;height:25px;background:#0088ff"></div>
<div style="left:0px;top:521px;width:77px;height:1px;background:#1e78cc"></div>
<div style="left:0px;top:497px;width:77px;height:1px;background:#0c7ee6"></div>
<div style="left:77px;top:497px;width:1px;height:25px;background:#1e78cc"></div>
<div class="c" style="left:-1px;top:498px;width:78px;height:25px;line-height:25px;color:#fff">意甲</div>
<div class="c" style="left:79px;top:498px;width:81px;height:25px;line-height:25px;">25-10-30</div>
<div class="c" style="left:161px;top:498px;width:80px;height:25px;line-height:25px;"><span style="color:#157a15">科莫</span></div>
<div class="c" style="left:242px;top:498px;width:97px;height:25px;line-height:25px;"><span style="color:#cc1c1c">3-1</span>(1-1)</div>
<div class="c" style="left:340px;top:498px;width:41px;height:25px;line-height:25px;">1-3</div>
<div class="c" style="left:382px;top:498px;width:80px;height:25px;line-height:25px;"><span style="">维罗纳</span></div>
<div style="left:463px;top:497px;width:199px;height:25px;background:#fdf8f4"></div>
<div class="c" style="left:463px;top:498px;width:52px;height:25px;line-height:25px;">1.05</div>
<div class="c" style="left:516px;top:498px;width:90px;height:25px;line-height:25px;">一球</div>
<div class="c" style="left:607px;top:498px;width:55px;height:25px;line-height:25px;">0.83</div>
<div style="left:663px;top:497px;width:215px;height:25px;background:#f0f6fa"></div>
<div class="c" style="left:663px;top:498px;width:70px;height:25px;line-height:25px;">1.58</div>
<div class="c" style="left:734px;top:498px;width:71px;height:25px;line-height:25px;">3.73</div>
<div class="c" style="left:806px;top:498px;width:72px;height:25px;line-height:25px;">6.55</div>
<div class="c" style="left:879px;top:498px;width:40px;height:25px;line-height:25px;color:#cc1c1c">胜</div>
<div class="c" style="left:920px;top:498px;width:41px;height:25px;line-height:25px;color:#cc1c1c">赢</div>
<div class="c" style="left:962px;top:498px;width:61px;height:25px;line-height:25px;color:#cc1c1c">大</div>
<div style="left:0px;top:522px;width:78px;height:1px;background:#6cc4ff"></div>
<div style="left:78px;top:522px;width:944px;height:1px;background:#bebebe"></div>
<div style="left:0px;top:523px;width:1022px;height:25px;background:#f0f0f0"></div>
<div style="left:0px;top:523px;width:78px;height:25px;background:#0088ff"></div>
<div style="left:0px;top:547px;width:77px;height:1px;background:#1e78cc"></div>
<div style="left:0px;top:523px;width:77px;height:1px;background:#0c7ee6"></div>
<div style="left:77px;top:523px;width:1px;height:25px;background:#1e78cc"></div>
<div class="c" style="left:-1px;top:524px;width:78px;height:25px;line-height:25px;color:#fff">意甲</div>
<div class="c" style="left:79px;top:524px;width:81px;height:25px;line-height:25px;">25-10-25</div>
<div class="c" style="left:161px;top:524px;width:80px;height:25px;line-height:25px;"><span style="">帕尔马</span></div>
<div class="c" style="left:242px;top:524px;width:97px;height:25px;line-height:25px;"><span style="color:#cc1c1c">0-0</span>(0-0)</div>
<div class="c" style="left:340px;top:524px;width:41px;height:25px;line-height:25px;">3-3</div>
<div class="c" style="left:382px;top:524px;width:80px;height:25px;line-height:25px;"><span style="color:#157a15">科莫</span></div>
<div style="left:463px;top:523px;width:199px;height:25px;background:#fdf8f4"></div>
<div class="c" style="left:463px;top:524px;width:52px;height:25px;line-height:25px;">0.88</div>
<div class="c" style="left:516px;top:524px;width:90px;height:25px;line-height:25px;">受半球</div>
<div class="c" style="left:607px;top:524px;width:55px;height:25px;line-height:25px;">1.00</div>
<div style="left:663px;top:523px;width:215px;height:25px;background:#f0f6fa"></div>
<div class="c" style="left:663px;top:524px;width:70px;height:25px;line-height:25px;">4.26</div>
<div class="c" style="left:734px;top:524px;width:71px;height:25px;line-height:25px;">3.28</div>
<div class="c" style="left:806px;top:524px;width:72px;height:25px;line-height:25px;">1.95</div>
<div class="c" style="left:879px;top:524px;width:40px;height:25px;line-height:25px;color:#157a15">平</div>
<div class="c" style="left:920px;top:524px;width:41px;height:25px;line-height:25px;color:#1616c4">输</div>
<div class="c" style="left:962px;top:524px;width:61px;height:25px;line-height:25px;color:#1616c4">小</div>
<div style="left:0px;top:548px;width:78px;height:1px;background:#6cc4ff"></div>
<div style="left:78px;top:548px;width:944px;height:1px;background:#bebebe"></div>
<div style="left:0px;top:549px;width:1022px;height:25px;background:#fff"></div>
<div style="left:0px;top:549px;width:78px;height:25px;background:#0088ff"></div>
<div style="left:0px;top:573px;width:77px;height:1px;background:#1e78cc"></div>
<div style="left:0px;top:549px;width:77px;height:1px;background:#0c7ee6"></div>
<div style="left:77px;top:549px;width:1px;height:25px;background:#1e78cc"></div>
<div class="c" style="left:-1px;top:550px;width:78px;height:25px;line-height:25px;color:#fff">意甲</div>
<div class="c" style="left:79px;top:550px;width:81px;height:25px;line-height:25px;">25-10-19</div>
<div class="c" style="left:161px;top:550px;width:80px;height:25px;line-height:25px;"><span style="color:#157a15">科莫</span></div>
<div class="c" style="left:242px;top:550px;width:97px;height:25px;line-height:25px;"><span style="color:#cc1c1c">2-0</span>(1-0)</div>
<div class="c" style="left:340px;top:550px;width:41px;height:25px;line-height:25px;">4-1</div>
<div class="c" style="left:382px;top:550px;width:80px;height:25px;line-height:25px;"><span style="">尤文图斯</span></div>
<div style="left:463px;top:549px;width:199px;height:25px;background:#fdf8f4"></div>
<div class="c" style="left:463px;top:550px;width:52px;height:25px;line-height:25px;">0.87</div>
<div class="c" style="left:516px;top:550px;width:90px;height:25px;line-height:25px;">受平/半</div>
<div class="c" style="left:607px;top:550px;width:55px;height:25px;line-height:25px;">1.01</div>
<div style="left:663px;top:549px;width:215px;height:25px;background:#f0f6fa"></div>
<div class="c" style="left:663px;top:550px;width:70px;height:25px;line-height:25px;">3.13</div>
<div class="c" style="left:734px;top:550px;width:71px;height:25px;line-height:25px;">3.20</div>
<div class="c" style="left:806px;top:550px;width:72px;height:25px;line-height:25px;">2.37</div>
<div class="c" style="left:879px;top:550px;width:40px;height:25px;line-height:25px;color:#cc1c1c">胜</div>
<div class="c" style="left:920px;top:550px;width:41px;height:25px;line-height:25px;color:#cc1c1c">赢</div>
<div class="c" style="left:962px;top:550px;width:61px;height:25px;line-height:25px;color:#1616c4">小</div>
<div style="left:0px;top:574px;width:78px;height:1px;background:#6cc4ff"></div>
<div style="left:78px;top:574px;width:944px;height:1px;background:#bebebe"></div>
<div style="left:0px;top:575px;width:1022px;height:25px;background:#f0f0f0"></div>
<div style="left:0px;top:575px;width:78px;height:25px;background:#0088ff"></div>
<div style="left:0px;top:599px;width:77px;height:1px;background:#1e78cc"></div>
<div style="left:0px;top:575px;width:77px;height:1px;background:#0c7ee6"></div>
<div style="left:77px;top:575px;width:1px;height:25px;background:#1e78cc"></div>
<div class="c" style="left:-1px;top:576px;width:78px;height:25px;line-height:25px;color:#fff">意甲</div>
<div class="c" style="left:79px;top:576px;width:81px;height:25px;line-height:25px;">25-10-05</div>
<div class="c" style="left:161px;top:576px;width:80px;height:25px;line-height:25px;"><span style="">亚特兰大</span></div>
<div class="c" style="left:242px;top:576px;width:97px;height:25px;line-height:25px;"><span style="color:#cc1c1c">1-1</span>(1-1)</div>
<div class="c" style="left:340px;top:576px;width:41px;height:25px;line-height:25px;">8-3</div>
<div class="c" style="left:382px;top:576px;width:80px;height:25px;line-height:25px;"><span style="color:#157a15">科莫</span></div>
<div style="left:463px;top:575px;width:199px;height:25px;background:#fdf8f4"></div>
<div class="c" style="left:463px;top:576px;width:52px;height:25px;line-height:25px;">0.89</div>
<div class="c" style="left:516px;top:576px;width:90px;height:25px;line-height:25px;">平/半</div>
<div class="c" style="left:607px;top:576px;width:55px;height:25px;line-height:25px;">0.99</div>
<div style="left:663px;top:575px;width:215px;height:25px;background:#f0f6fa"></div>
<div class="c" style="left:663px;top:576px;width:70px;height:25px;line-height:25px;">2.28</div>
<div class="c" style="left:734px;top:576px;width:71px;height:25px;line-height:25px;">3.35</div>
<div class="c" style="left:806px;top:576px;width:72px;height:25px;line-height:25px;">3.19</div>
<div class="c" style="left:879px;top:576px;width:40px;height:25px;line-height:25px;color:#157a15">平</div>
<div class="c" style="left:920px;top:576px;width:41px;height:25px;line-height:25px;color:#cc1c1c">赢</div>
<div class="c" style="left:962px;top:576px;width:61px;height:25px;line-height:25px;color:#1616c4">小</div>
<div style="left:0px;top:600px;width:78px;height:1px;background:#6cc4ff"></div>
<div style="left:78px;top:600px;width:944px;height:1px;background:#bebebe"></div>
<div style="left:0px;top:601px;width:1022px;height:25px;background:#fff"></div>
<div style="left:0px;top:601px;width:78px;height:25px;background:#0088ff"></div>
<div style="left:0px;top:625px;width:77px;height:1px;background:#1e78cc"></div>
<div style="left:0px;top:601px;width:77px;height:1px;background:#0c7ee6"></div>
<div style="left:77px;top:601px;width:1px;height:25px;background:#1e78cc"></div>
<div class="c" style="left:-1px;top:602px;width:78px;height:25px;line-height:25px;color:#fff">意甲</div>
<div class="c" style="left:79px;top:602px;width:81px;height:25px;line-height:25px;">25-09-27</div>
<div class="c" style="left:161px;top:602px;width:80px;height:25px;line-height:25px;"><span class="bd">1</span><span style="color:#157a15">科莫</span></div>
<div class="c" style="left:242px;top:602px;width:97px;height:25px;line-height:25px;"><span style="color:#cc1c1c">1-1</span>(1-0)</div>
<div class="c" style="left:340px;top:602px;width:41px;height:25px;line-height:25px;">4-3</div>
<div class="c" style="left:382px;top:602px;width:80px;height:25px;line-height:25px;"><span style="">克雷莫纳</span></div>
<div style="left:463px;top:601px;width:199px;height:25px;background:#fdf8f4"></div>
<div class="c" style="left:463px;top:602px;width:52px;height:25px;line-height:25px;">1.06</div>
<div class="c" style="left:516px;top:602px;width:90px;height:25px;line-height:25px;">一/球半</div>
<div class="c" style="left:607px;top:602px;width:55px;height:25px;line-height:25px;">0.82</div>
<div style="left:663px;top:601px;width:215px;height:25px;background:#f0f6fa"></div>
<div class="c" style="left:663px;top:602px;width:70px;height:25px;line-height:25px;">1.43</div>
<div class="c" style="left:734px;top:602px;width:71px;height:25px;line-height:25px;">4.54</div>
<div class="c" style="left:806px;top:602px;width:72px;height:25px;line-height:25px;">7.39</div>
<div class="c" style="left:879px;top:602px;width:40px;height:25px;line-height:25px;color:#157a15">平</div>
<div class="c" style="left:920px;top:602px;width:41px;height:25px;line-height:25px;color:#1616c4">输</div>
<div class="c" style="left:962px;top:602px;width:61px;height:25px;line-height:25px;color:#1616c4">小</div>
<div style="left:0px;top:626px;width:78px;height:1px;background:#8cc0f8"></div>
<div style="left:78px;top:626px;width:944px;height:1px;background:#bebebe"></div>
<div style="left:0px;top:627px;width:1022px;height:25px;background:#f0f0f0"></div>
<div style="left:0px;top:627px;width:78px;height:25px;background:#3b3bff"></div>
<div style="left:0px;top:651px;width:77px;height:1px;background:#3f3fca"></div>
<div style="left:0px;top:627px;width:77px;height:1px;background:#3138e0"></div>
<div style="left:77px;top:627px;width:1px;height:25px;background:#3f3fca"></div>
<div class="c" style="left:-1px;top:628px;width:78px;height:25px;line-height:25px;color:#fff">意杯</div>
<div class="c" style="left:79px;top:628px;width:81px;height:25px;line-height:25px;">25-09-25</div>
<div class="c" style="left:161px;top:628px;width:80px;height:25px;line-height:25px;"><span style="color:#157a15">科莫</span></div>
<div class="c" style="left:242px;top:628px;width:97px;height:25px;line-height:25px;"><span style="color:#cc1c1c">3-0</span>(3-0)</div>
<div class="c" style="left:340px;top:628px;width:41px;height:25px;line-height:25px;">6-5</div>
<div class="c" style="left:382px;top:628px;width:80px;height:25px;line-height:25px;"><span style="">萨索洛</span></div>
<div style="left:463px;top:627px;width:199px;height:25px;background:#fdf8f4"></div>
<div class="c" style="left:463px;top:628px;width:52px;height:25px;line-height:25px;">1.05</div>
<div class="c" style="left:516px;top:628px;width:90px;height:25px;line-height:25px;">一/球半</div>
<div class="c" style="left:607px;top:628px;width:55px;height:25px;line-height:25px;">0.83</div>
<div style="left:663px;top:627px;width:215px;height:25px;background:#f0f6fa"></div>
<div class="c" style="left:663px;top:628px;width:70px;height:25px;line-height:25px;">1.48</div>
<div class="c" style="left:734px;top:628px;width:71px;height:25px;line-height:25px;">4.45</div>
<div class="c" style="left:806px;top:628px;width:72px;height:25px;line-height:25px;">6.03</div>
<div class="c" style="left:879px;top:628px;width:40px;height:25px;line-height:25px;color:#cc1c1c">胜</div>
<div class="c" style="left:920px;top:628px;width:41px;height:25px;line-height:25px;color:#cc1c1c">赢</div>
<div class="c" style="left:962px;top:628px;width:61px;height:25px;line-height:25px;color:#cc1c1c">大</div>
<div style="left:0px;top:652px;width:78px;height:1px;background:#8cc0f8"></div>
<div style="left:78px;top:652px;width:944px;height:1px;background:#bebebe"></div>
<div style="left:0px;top:653px;width:1022px;height:25px;background:#fff"></div>
<div style="left:0px;top:653px;width:78px;height:25px;background:#0088ff"></div>
<div style="left:0px;top:677px;width:77px;height:1px;background:#1e78cc"></div>
<div style="left:0px;top:653px;width:77px;height:1px;background:#0c7ee6"></div>
<div style="left:77px;top:653px;width:1px;height:25px;background:#1e78cc"></div>
<div class="c" style="left:-1px;top:654px;width:78px;height:25px;line-height:25px;color:#fff">意甲</div>
<div class="c" style="left:79px;top:654px;width:81px;height:25px;line-height:25px;">25-09-22</div>
<div class="c" style="left:161px;top:654px;width:80px;height:25px;line-height:25px;"><span style="">佛罗伦萨</span></div>
<div class="c" style="left:242px;top:654px;width:97px;height:25px;line-height:25px;"><span style="color:#cc1c1c">1-2</span>(1-0)</div>
<div class="c" style="left:340px;top:654px;width:41px;height:25px;line-height:25px;">2-6</div>
<div class="c" style="left:382px;top:654px;width:80px;height:25px;line-height:25px;"><span style="color:#157a15">科莫</span></div>
<div style="left:463px;top:653px;width:199px;height:25px;background:#fdf8f4"></div>
<div class="c" style="left:463px;top:654px;width:52px;height:25px;line-height:25px;">0.93</div>
<div class="c" style="left:516px;top:654px;width:90px;height:25px;line-height:25px;">平手</div>
<div class="c" style="left:607px;top:654px;width:55px;height:25px;line-height:25px;">0.95</div>
<div style="left:663px;top:653px;width:215px;height:25px;background:#f0f6fa"></div>
<div class="c" style="left:663px;top:654px;width:70px;height:25px;line-height:25px;">2.56</div>
<div class="c" style="left:734px;top:654px;width:71px;height:25px;line-height:25px;">3.23</div>
<div class="c" style="left:806px;top:654px;width:72px;height:25px;line-height:25px;">2.82</div>
<div class="c" style="left:879px;top:654px;width:40px;height:25px;line-height:25px;color:#cc1c1c">胜</div>
<div class="c" style="left:920px;top:654px;width:41px;height:25px;line-height:25px;color:#cc1c1c">赢</div>
<div class="c" style="left:962px;top:654px;width:61px;height:25px;line-height:25px;color:#cc1c1c">大</div>
<div style="left:0px;top:678px;width:78px;height:1px;background:#6cc4ff"></div>
<div style="left:78px;top:678px;width:944px;height:1px;background:#bebebe"></div>
<div style="left:0px;top:679px;width:1022px;height:25px;background:#f0f0f0"></div>
<div style="left:0px;top:679px;width:78px;height:25px;background:#0088ff"></div>
<div style="left:0px;top:703px;width:77px;height:1px;background:#1e78cc"></div>
<div style="left:0px;top:679px;width:77px;height:1px;background:#0c7ee6"></div>
<div style="left:77px;top:679px;width:1px;height:25px;background:#1e78cc"></div>
<div class="c" style="left:-1px;top:680px;width:78px;height:25px;line-height:25px;color:#fff">意甲</div>
<div class="c" style="left:79px;top:680px;width:81px;height:25px;line-height:25px;">25-09-16</div>
<div class="c" style="left:161px;top:680px;width:80px;height:25px;line-height:25px;"><span class="bd">1</span><span style="color:#157a15">科莫</span></div>
<div class="c" style="left:242px;top:680px;width:97px;height:25px;line-height:25px;"><span style="color:#cc1c1c">1-1</span>(1-0)</div>
<div class="c" style="left:340px;top:680px;width:41px;height:25px;line-height:25px;">0-8</div>
<div class="c" style="left:382px;top:680px;width:80px;height:25px;line-height:25px;"><span style="">热那亚</span></div>
<div style="left:463px;top:679px;width:199px;height:25px;background:#fdf8f4"></div>
<div class="c" style="left:463px;top:680px;width:52px;height:25px;line-height:25px;">0.95</div>
<div class="c" style="left:516px;top:680px;width:90px;height:25px;line-height:25px;">半/一</div>
<div class="c" style="left:607px;top:680px;width:55px;height:25px;line-height:25px;">0.94</div>
<div style="left:663px;top:679px;width:215px;height:25px;background:#f0f6fa"></div>
<div class="c" style="left:663px;top:680px;width:70px;height:25px;line-height:25px;">1.68</div>
<div class="c" style="left:734px;top:680px;width:71px;height:25px;line-height:25px;">3.63</div>
<div class="c" style="left:806px;top:680px;width:72px;height:25px;line-height:25px;">5.54</div>
<div class="c" style="left:879px;top:680px;width:40px;height:25px;line-height:25px;color:#157a15">平</div>
<div class="c" style="left:920px;top:680px;width:41px;height:25px;line-height:25px;color:#1616c4">输</div>
<div class="c" style="left:962px;top:680px;width:61px;height:25px;line-height:25px;color:#1616c4">小</div>
<div style="left:0px;top:704px;width:78px;height:1px;background:#6cc4ff"></div>
<div style="left:78px;top:704px;width:944px;height:1px;background:#bebebe"></div>
<div style="left:78px;top:406px;width:1px;height:38px;background:#b9bec6"></div>
<div style="left:78px;top:445px;width:1px;height:260px;background:#bebebe"></div>
<div style="left:160px;top:406px;width:1px;height:38px;background:#b9bec6"></div>
<div style="left:160px;top:445px;width:1px;height:260px;background:#bebebe"></div>
<div style="left:241px;top:406px;width:1px;height:38px;background:#b9bec6"></div>
<div style="left:241px;top:445px;width:1px;height:260px;background:#bebebe"></div>
<div style="left:339px;top:406px;width:1px;height:38px;background:#b9bec6"></div>
<div style="left:339px;top:445px;width:1px;height:260px;background:#bebebe"></div>
<div style="left:381px;top:406px;width:1px;height:38px;background:#b9bec6"></div>
<div style="left:381px;top:445px;width:1px;height:260px;background:#bebebe"></div>
<div style="left:462px;top:406px;width:1px;height:38px;background:#b9bec6"></div>
<div style="left:462px;top:445px;width:1px;height:260px;background:#bebebe"></div>
<div style="left:662px;top:406px;width:1px;height:38px;background:#b9bec6"></div>
<div style="left:662px;top:445px;width:1px;height:260px;background:#bebebe"></div>
<div style="left:878px;top:406px;width:1px;height:38px;background:#b9bec6"></div>
<div style="left:878px;top:445px;width:1px;height:260px;background:#bebebe"></div>
<div style="left:515px;top:426px;width:1px;height:18px;background:#b9bec6"></div>
<div style="left:515px;top:445px;width:1px;height:260px;background:#bebebe"></div>
<div style="left:606px;top:426px;width:1px;height:18px;background:#b9bec6"></div>
<div style="left:606px;top:445px;width:1px;height:260px;background:#bebebe"></div>
<div style="left:733px;top:426px;width:1px;height:18px;background:#b9bec6"></div>
<div style="left:733px;top:445px;width:1px;height:260px;background:#bebebe"></div>
<div style="left:805px;top:426px;width:1px;height:18px;background:#b9bec6"></div>
<div style="left:805px;top:445px;width:1px;height:260px;background:#bebebe"></div>
<div style="left:919px;top:426px;width:1px;height:18px;background:#b9bec6"></div>
<div style="left:919px;top:445px;width:1px;height:260px;background:#bebebe"></div>
<div style="left:961px;top:426px;width:1px;height:18px;background:#b9bec6"></div>
<div style="left:961px;top:445px;width:1px;height:260px;background:#bebebe"></div>
<div style="left:78px;top:445px;width:1px;height:260px;background:#f4f4f4"></div>
<div style="left:0px;top:705px;width:1022px;height:25px;background:#fff"></div>
<div class="c" style="left:0px;top:706px;width:1023px;height:25px;line-height:25px;letter-spacing:0.2px">近<span style="color:#cc1c1c">10</span>场,胜4平6负0, 胜率:<span style="color:#cc1c1c">40%</span> 让胜率:<span style="color:#cc1c1c">60%</span> 大率:<span style="color:#cc1c1c">30%</span> 单率:<span style="color:#cc1c1c">20%</span></div>
<div style="left:0px;top:730px;width:1022px;height:1px;background:#bebebe"></div>
</body></html>
